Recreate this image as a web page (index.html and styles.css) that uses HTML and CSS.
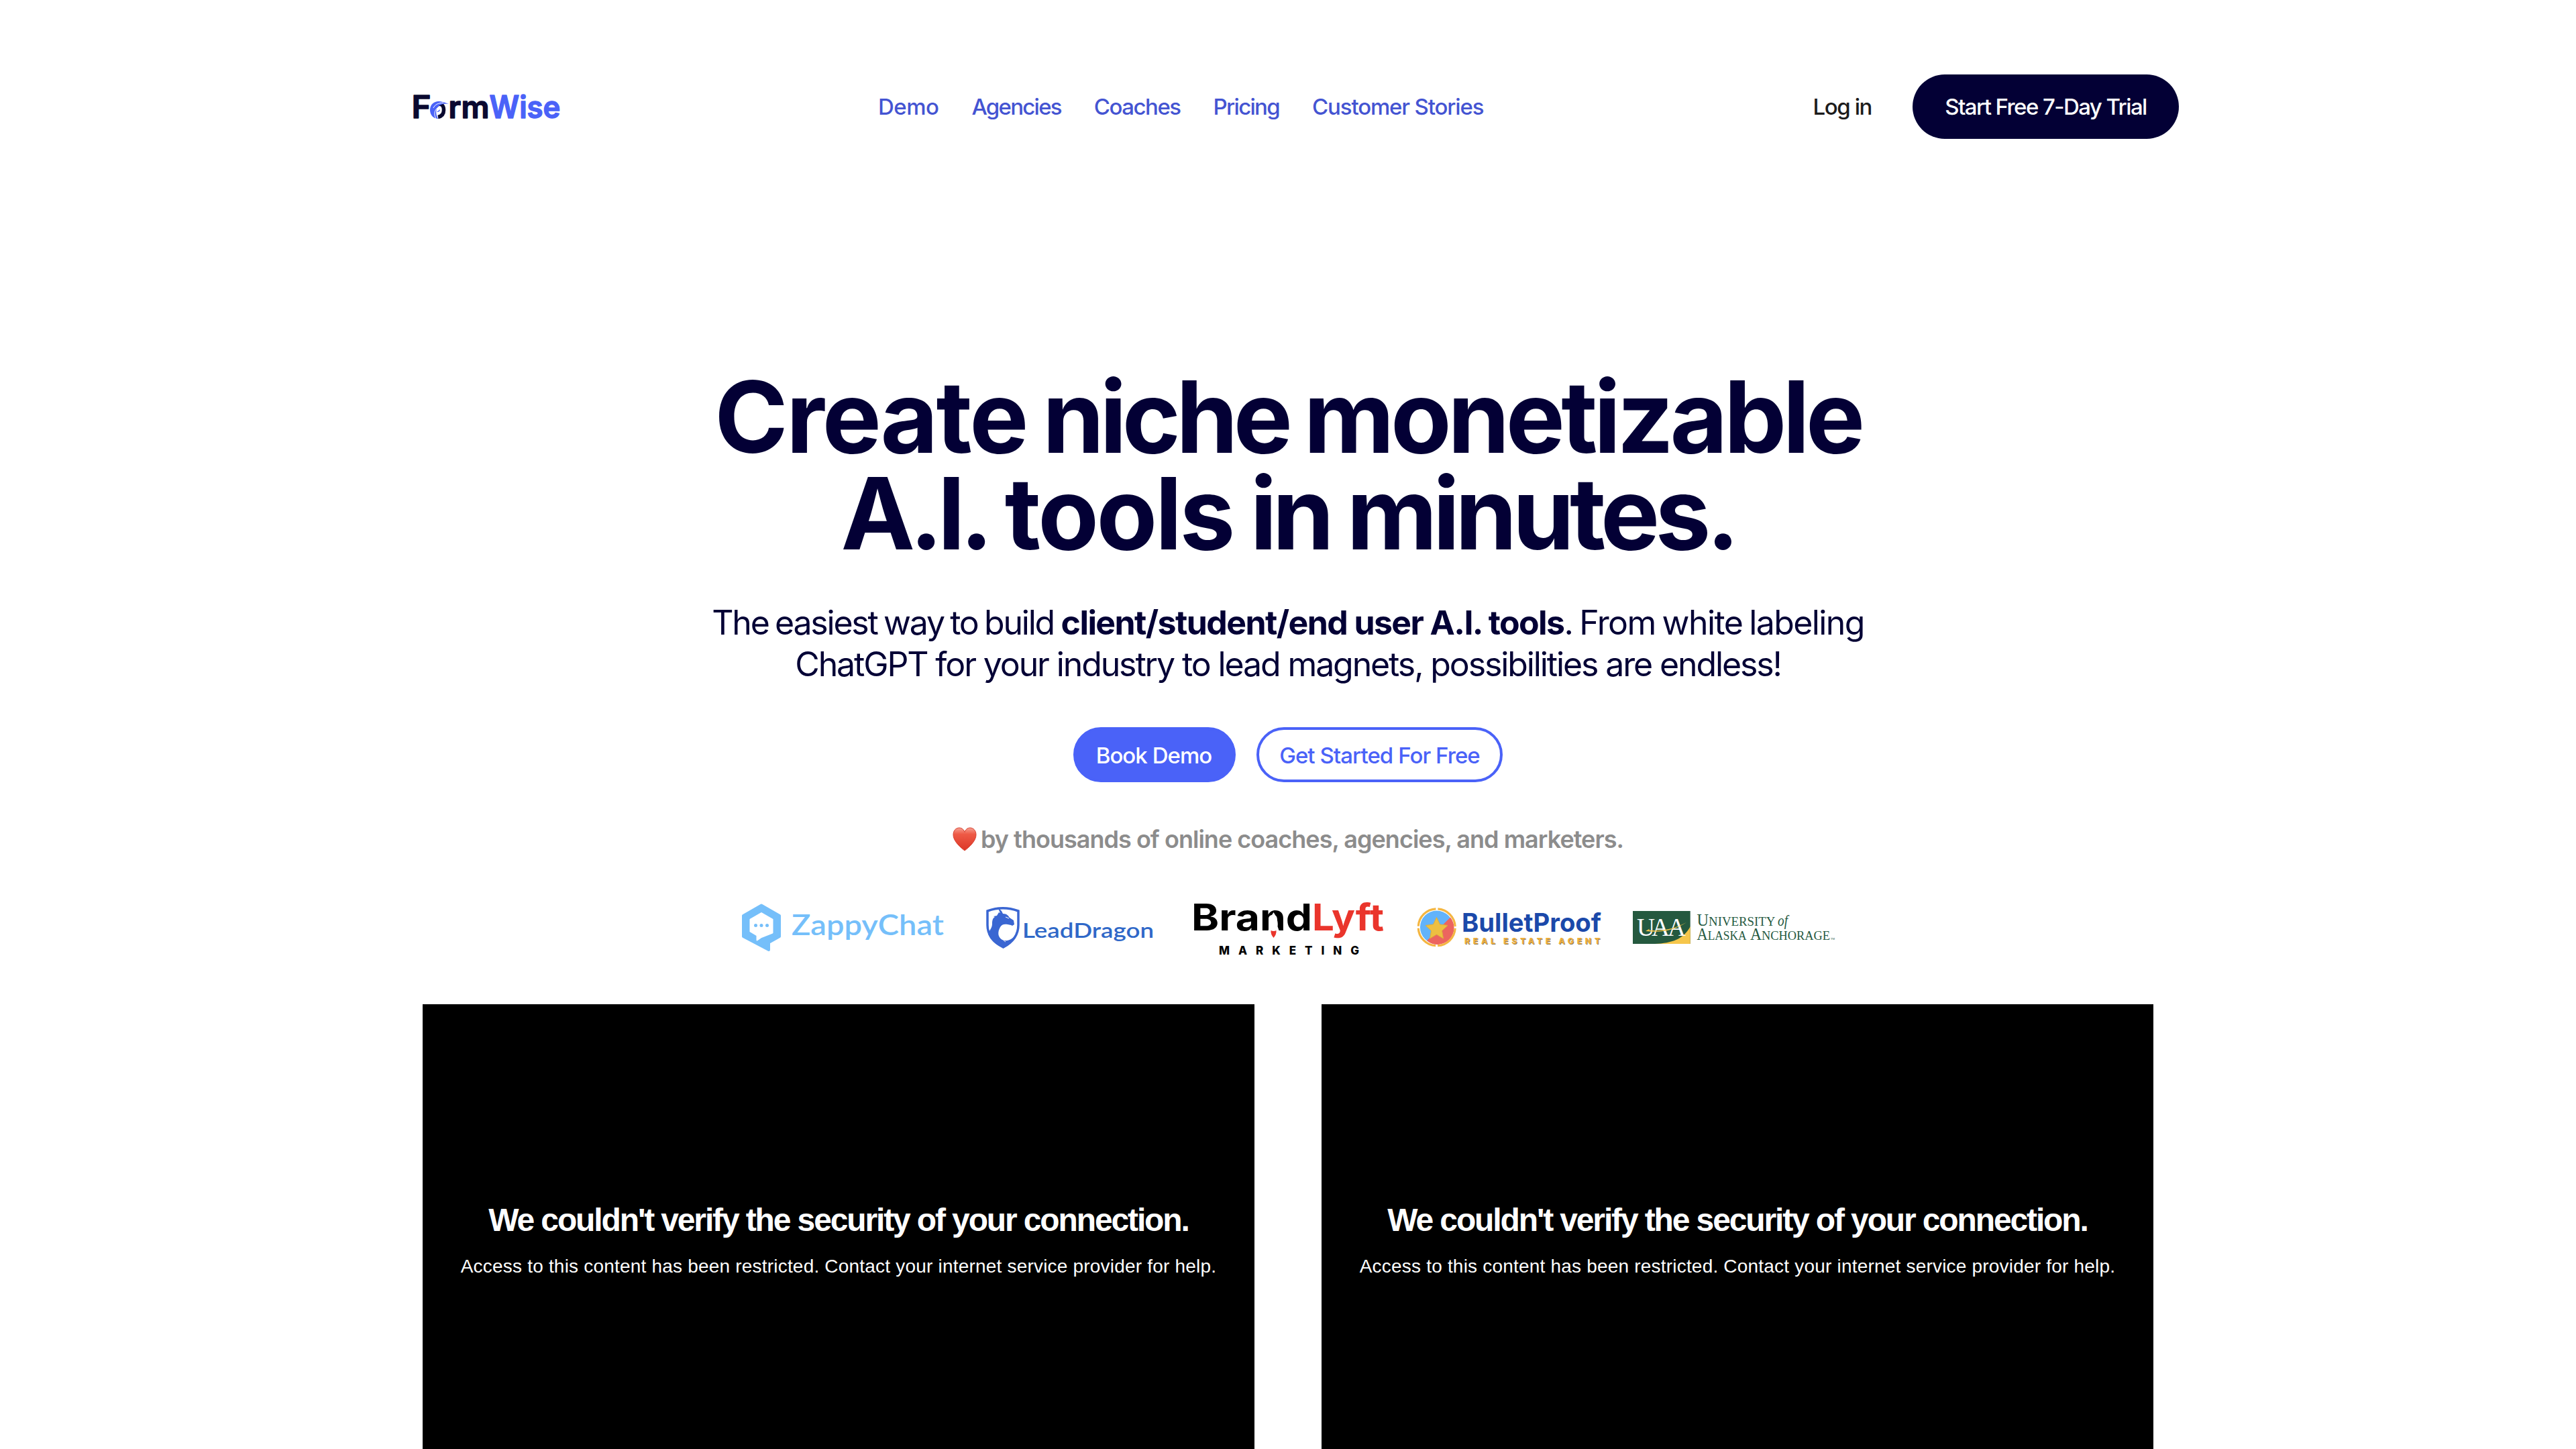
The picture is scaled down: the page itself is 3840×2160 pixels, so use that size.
FILE: index.html
```html
<!DOCTYPE html>
<html lang="en">
<head>
<meta charset="utf-8">
<title>FormWise</title>
<link rel="stylesheet" href="styles.css">
</head>
<body>
<header class="header">
  <svg class="brand" viewBox="610 111 230 96" role="img" aria-label="FormWise">
    <g class="brand-text">
      <g class="brand-dark">
        <text x="613.5" y="176" textLength="29" lengthAdjust="spacingAndGlyphs">F</text>
        <text x="668.5" y="176" textLength="61" lengthAdjust="spacingAndGlyphs">rm</text>
      </g>
      <text class="brand-blue" x="729.5" y="176" textLength="106" lengthAdjust="spacingAndGlyphs">Wise</text>
    </g>
    <path d="M652 156c7-2.500 9.500 2.500 9.500 8 0 6-3.500 9.500-8.500 10.500" fill="none" stroke="#0a0930" stroke-width="5.500"/>
    <path d="M653 177c-7 0-12-6-12-13 0-8 6-13 13-13 4 0 6 1.500 8 1.500l7 2.500c-9-1-13 1-15.500 4-4 3-4.500 11-.5 18z" fill="#4a62f8"/>
    <path d="M646 161c2-5 8-8 15-7.500M650 177c-4-7-2-13 2-16" fill="none" stroke="#fff" stroke-width="1"/>
    <path d="M651 167l5-4c0 3-2 4-5 4z" fill="#4a62f8"/>
  </svg>
  <nav class="nav">
    <a class="t-demo">Demo</a>
    <a class="t-agencies">Agencies</a>
    <a class="t-coaches">Coaches</a>
    <a class="t-pricing">Pricing</a>
    <a class="t-stories">Customer Stories</a>
  </nav>
  <a class="login">Log in</a>
  <a class="trial">Start Free 7-Day Trial</a>
</header>

<main class="main">
  <h1 class="title">
    <span class="title-line title-first"><span class="t-create">Create</span> <span class="t-niche">niche</span> monetizable</span>
    <span class="title-line title-second"><span class="t-ai">A.I.</span> <span class="t-tools">tools</span> in minutes.</span>
  </h1>
  <p class="lead">
    <span class="lead-line lead-first"><span class="lead-a">The easiest way to build</span> <b>client/student/end user A.I. tools</b><span class="lead-c">. From white labeling</span></span>
    <span class="lead-line lead-second">ChatGPT for your industry to lead magnets, possibilities are endless!</span>
  </p>
  <div class="actions">
    <a class="btn btn-solid">Book Demo</a>
    <a class="btn btn-outline">Get Started For Free</a>
  </div>
  <p class="loved">
    <svg class="heart" viewBox="0 0 36 36" aria-hidden="true">
      <defs><linearGradient id="heart" x1="0" y1="0" x2="0" y2="1"><stop offset="0" stop-color="#f6a193"/><stop offset=".28" stop-color="#ee5a46"/><stop offset="1" stop-color="#dc3626"/></linearGradient></defs>
      <path d="M18 35C10 29 1 20 1 11.500 1 5 5 1 10 1c4 0 7 3 8 6.500C19 4 22 1 26 1c5 0 9 4 9 10.500C35 20 26 29 18 35z" fill="url(#heart)" stroke="#d8402f" stroke-width="1"/>
    </svg>
    <span>by thousands of online coaches, agencies, and marketers.</span>
  </p>

  <div class="logos">
    <svg class="logo-zappy" viewBox="1100 1334 310 100" role="img" aria-label="ZappyChat">
      <path fill="#75bffa" stroke="#75bffa" stroke-width="4" stroke-linejoin="round" d="M1135 1349.500l27 15.500v31l-16 9v11l-38-20v-31z"/>
      <path fill="#fff" stroke="#fff" stroke-width="2" stroke-linejoin="round" d="M1135 1361l16.500 9.500v20l-16.500 6.500-6.500 4.500v-7l-10-6v-18z"/>
      <g fill="#75bffa"><circle cx="1126.500" cy="1379.500" r="2.500"/><circle cx="1135" cy="1379.500" r="2.500"/><circle cx="1143.500" cy="1379.500" r="2.500"/></g>
      <text class="zappy-text" x="1180" y="1393.500" textLength="227" lengthAdjust="spacingAndGlyphs">ZappyChat</text>
    </svg>
    <svg class="logo-dragon" viewBox="1466 1334 256 100" role="img" aria-label="LeadDragon">
      <path fill="#fff" stroke="#3a66d2" stroke-width="3.500" d="M1472 1358q23-8.500 46 0v21q0 21-22.500 33-23.500-12-23.500-33z"/>
      <path fill="#3a66d2" d="M1473 1392c3-7 6-9 6-15 0-7 2-9 4-10l-2-1 5-1 3-5 2 1-4-9 6 6 2 4c6 0 8 3 10 6l6 4 1 6-3 2-2-1-5-1c-5-1-9 0-11 4-4 7-4 15 3 19 7 3 15 0 20-8-3 11-11 17-18 20-11-4-20-12-23-21z"/>
      <path fill="none" stroke="#fff" stroke-width="1" d="M1499 1367l5 2M1491 1387c0 8 3 14 8 17"/>
      <text class="dragon-text" x="1524" y="1397.500" textLength="196" lengthAdjust="spacingAndGlyphs">LeadDragon</text>
    </svg>
    <svg class="logo-lyft" viewBox="1776 1334 290 100" role="img" aria-label="BrandLyft Marketing">
      <g class="lyft-text">
        <text x="1776" y="1386.500" textLength="180" lengthAdjust="spacingAndGlyphs">Brand</text>
        <text class="lyft-red" x="1956" y="1386.500" textLength="107" lengthAdjust="spacingAndGlyphs">Lyft</text>
      </g>
      <path fill="#fff" d="M1898.500 1360c-5 7-7 15-6 21l-2 6h16l-2-6c1-6-1-14-6-21z"/>
      <path fill="#ea352c" d="M1894.500 1387q4 2 8 0 .5 6-4 11-4.500-5-4-11z"/>
      <text class="lyft-sub" x="1817" y="1422.500" textLength="209">MARKETING</text>
    </svg>
    <svg class="logo-bullet" viewBox="2108 1334 282 100" role="img" aria-label="BulletProof Real Estate Agent">
      <circle cx="2141.700" cy="1382.300" r="24.800" fill="#62b3fb"/>
      <path fill="#ec655f" d="M2162 1367.500A24.800 24.800 0 0 1 2127 1402.300z"/>
      <circle cx="2141.700" cy="1382.300" r="27.500" fill="none" stroke="#f4b642" stroke-width="3.200" stroke-dasharray="40.200 3" stroke-dashoffset="-1.500"/>
      <path fill="#edbf41" stroke="#dcae3c" d="M2141.500 1367.500l5 10.500 11.500 1.500-8.500 8 2 11.500-10-6-10 6 2-11.500-8.500-8 11.500-1.500z"/>
      <text class="bullet-text" x="2179" y="1389.300" textLength="208" lengthAdjust="spacingAndGlyphs">BulletProof</text>
      <text class="bullet-sub" x="2183" y="1407.100" textLength="202">REAL ESTATE AGENT</text>
    </svg>
    <svg class="logo-uaa" viewBox="2430 1334 310 100" role="img" aria-label="University of Alaska Anchorage">
      <path fill="#25593f" d="M2434 1358h85.700v49H2434z"/>
      <path fill="#f6c64b" d="M2519.700 1381v26H2467c25-1 43-7 52.700-26z"/>
      <g class="uaa-mark">
        <text x="2440" y="1394.500" textLength="27" lengthAdjust="spacingAndGlyphs">U</text>
        <text x="2462" y="1394.500" textLength="27" lengthAdjust="spacingAndGlyphs">A</text>
        <text x="2486" y="1394.500" textLength="27" lengthAdjust="spacingAndGlyphs">A</text>
      </g>
      <path fill="#f6c64b" d="M2453 1388l6-3.500-1 2c20 2.500 38-2 56-11.500-18 12-38 15.500-61 13z"/>
      <g class="uaa-text">
        <text x="2529.500" y="1380" textLength="117" lengthAdjust="spacingAndGlyphs"><tspan class="uaa-cap">U</tspan>NIVERSITY</text>
        <text class="uaa-of" x="2650" y="1380" textLength="15" lengthAdjust="spacingAndGlyphs">of</text>
        <text x="2529.500" y="1400.700" textLength="74" lengthAdjust="spacingAndGlyphs"><tspan class="uaa-cap">A</tspan>LASKA</text>
        <text x="2609" y="1400.700" textLength="119" lengthAdjust="spacingAndGlyphs"><tspan class="uaa-cap">A</tspan>NCHORAGE</text>
        <text class="uaa-tm" x="2729" y="1400.700">TM</text>
      </g>
    </svg>
  </div>

  <section class="videos">
    <article class="video">
      <h2>We couldn't verify the security of your connection.</h2>
      <p>Access to this content has been restricted. Contact your internet service provider for help.</p>
    </article>
    <article class="video">
      <h2>We couldn't verify the security of your connection.</h2>
      <p>Access to this content has been restricted. Contact your internet service provider for help.</p>
    </article>
  </section>
</main>
</body>
</html>
```
FILE: styles.css
```css
* { box-sizing: border-box; }
body {
  margin: 0;
  height: 2160px;
  overflow: hidden;
  background: #fff;
  color: #030035;
  font-family: Inter, sans-serif;
  display: flex;
  flex-direction: column;
}
h1, h2, p { margin: 0; }
svg { display: block; flex: none; overflow: visible; }

.header {
  display: flex;
  align-items: center;
  padding: 111px 592px 0 610px;
  font-size: 33px;
  font-weight: 500;
  line-height: 96px;
  white-space: nowrap;
}
.brand { width: 230px; height: 96px; }
.brand-text { font: 600 46px Inter, sans-serif; stroke-width: 1.4; stroke-linejoin: round; }
.brand-dark { fill: #0a0930; stroke: #0a0930; }
.brand-blue { fill: #4a62f8; stroke: #4a62f8; }
.nav { display: flex; gap: 49px; margin-left: 469px; padding-top: 1px; line-height: 95px; color: #4454d2; font-weight: 450; }
.t-demo { letter-spacing: -0.5px; }
.t-agencies { letter-spacing: -1.75px; }
.t-coaches { letter-spacing: -1.5px; }
.t-pricing { letter-spacing: -1.7px; }
.t-stories { letter-spacing: -1.15px; }
.login { margin-left: auto; margin-right: 61px; color: #1c1c1c; letter-spacing: -1.43px; }
.trial {
  width: 397px;
  height: 96px;
  border-radius: 48px;
  background: #030035;
  color: #fff;
  text-align: center;
  letter-spacing: -1.57px;
}

.main {
  flex: 1;
  display: flex;
  flex-direction: column;
  align-items: center;
  padding-top: 343px;
}
.title {
  font-size: 148px;
  line-height: 144px;
  font-weight: 700;
  text-align: center;
  white-space: nowrap;
}
.title-line { display: block; }
.title-first { letter-spacing: -5.6px; word-spacing: -6px; }
.title-second { letter-spacing: -6.73px; word-spacing: -3px; }
.t-create { letter-spacing: -2.9px; }
.t-niche { letter-spacing: -6.7px; }
.t-ai { letter-spacing: -8px; }
.t-tools { letter-spacing: -3.4px; }
.lead {
  margin-top: 59px;
  font-size: 50px;
  line-height: 62px;
  text-align: center;
  white-space: nowrap;
}
.lead-line { display: block; }
.lead-first { word-spacing: -3.5px; }
.lead-a { letter-spacing: -2.2px; word-spacing: -2.5px; }
.lead b { letter-spacing: -1.59px; word-spacing: 0; }
.lead-c { letter-spacing: -1.6px; word-spacing: -2.5px; }
.lead-second { letter-spacing: -2.12px; }

.actions { display: flex; gap: 31px; margin-top: 63px; }
.btn {
  height: 82px;
  border: 4px solid #4a62f8;
  border-radius: 41px;
  font-size: 33px;
  line-height: 76px;
  text-align: center;
  white-space: nowrap;
  letter-spacing: -0.95px;
}
.btn-solid { width: 242px; padding-right: 2px; background: #4a62f8; color: #fff; font-weight: 500; }
.btn-outline { width: 367px; color: #4a62f8; font-weight: 450; }

.loved {
  display: flex;
  align-items: center;
  gap: 6px;
  margin-top: 63px;
  height: 44px;
  font-size: 36px;
  line-height: 44px;
  font-weight: 600;
  letter-spacing: -0.976px;
  color: #8c8c8c;
  white-space: nowrap;
}
.heart { width: 36px; height: 36px; }

.logos { display: flex; margin-top: 61px; }
.logos svg { height: 100px; }
.logo-zappy { width: 310px; }
.logo-dragon { width: 256px; margin-left: 56px; }
.logo-lyft { width: 290px; margin-left: 54px; }
.logo-bullet { width: 282px; margin-left: 42px; }
.logo-uaa { width: 310px; margin-left: 40px; }
.zappy-text { font: 600 43px Lato, sans-serif; fill: #75bffa; }
.dragon-text { font: 600 30px Lato, sans-serif; fill: #2f68c8; }
.lyft-text { font: 750 55px Inter, sans-serif; fill: #000; }
.lyft-red { fill: #ea352c; }
.lyft-sub { font: 800 17px Inter, sans-serif; fill: #000; }
.bullet-text { font: 700 38px Inter, sans-serif; fill: #1b49aa; }
.bullet-sub { font: 800 12px Inter, sans-serif; fill: #f0b03c; text-shadow: 1px 1px 0 #8a7a55; }
.uaa-mark { font: 37px "Liberation Serif", serif; fill: #fff; }
.uaa-text { font: 19px "Liberation Serif", serif; fill: #25593f; }
.uaa-cap { font-size: 24.5px; }
.uaa-of { font-style: italic; font-size: 23px; }
.uaa-tm { font-size: 4px; }

.videos {
  flex: 1;
  display: grid;
  grid-template-columns: 1240px 1240px;
  column-gap: 100px;
  margin-top: 63px;
}
.video {
  padding-top: 294px;
  background: #000;
  color: #fff;
  font-family: "Liberation Sans", Arial, sans-serif;
  text-align: center;
  white-space: nowrap;
}
.video h2 { font-size: 48px; line-height: 56px; letter-spacing: -2.13px; }
.video p { margin-top: 21px; font-size: 28px; line-height: 40px; letter-spacing: 0.2px; }
```
